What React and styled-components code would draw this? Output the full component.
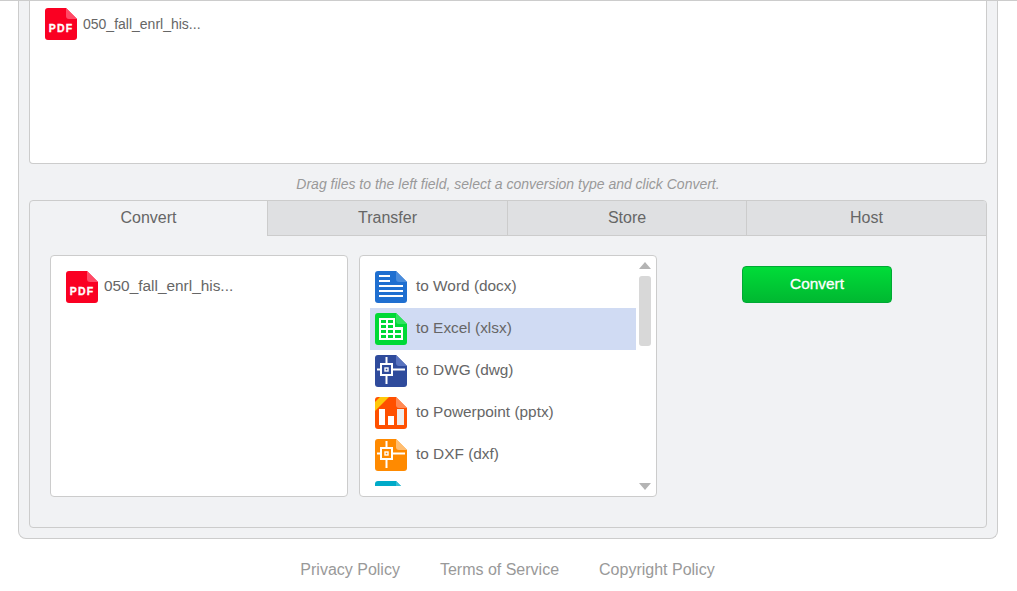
import React from 'react';
import styled, { createGlobalStyle } from 'styled-components';

const GlobalStyle = createGlobalStyle`
  html, body {
    margin: 0;
    padding: 0;
    background: #fff;
    font-family: "Liberation Sans", Arial, sans-serif;
    color: #666;
    overflow: hidden;
  }
`;

const Page = styled.div`
  height: 591px;
  border-top: 1px solid #ccc;
  box-sizing: border-box;
`;

const Panel = styled.main`
  box-sizing: border-box;
  width: 980px;
  height: 538px;
  margin-left: 18px;
  padding: 0 10px 10px;
  background: #f1f2f4;
  border: 1px solid #ccc;
  border-top: none;
  border-radius: 0 0 8px 8px;
`;

const DropField = styled.section`
  box-sizing: border-box;
  height: 163px;
  padding: 7px 15px;
  background: #fff;
  border: 1px solid #ccc;
  border-top: none;
  border-radius: 0 0 4px 4px;
`;

const FileRow = styled.div`
  display: flex;
  align-items: center;
  gap: 6px;
  font-size: ${(p) => (p.$large ? '15.4px' : '14px')};
  color: #666;
`;

const FileName = styled.span`
  margin-bottom: ${(p) => (p.$large ? '2px' : '0')};
`;

const Hint = styled.p`
  margin: 0;
  height: 36px;
  line-height: 41px;
  text-align: center;
  font-size: 14px;
  font-style: italic;
  color: #999;
`;

const TabPanel = styled.section`
  box-sizing: border-box;
  height: 328px;
  border: 1px solid #ccc;
  border-radius: 4px;
  overflow: hidden;
`;

const TabBar = styled.nav`
  display: grid;
  grid-template-columns: 237px 240px 239px 1fr;
  height: 35px;
`;

const Tab = styled.div`
  display: flex;
  align-items: center;
  justify-content: center;
  box-sizing: border-box;
  font-size: 16px;
  color: #666;
  background: ${(p) => (p.$active ? 'transparent' : '#dfe0e2')};
  border-bottom: 1px solid ${(p) => (p.$active ? 'transparent' : '#ccc')};
  border-left: ${(p) => (p.$active ? 'none' : '1px solid #ccc')};
`;

const TabBody = styled.div`
  display: flex;
  padding: 19px 20px;
  gap: 11px;
`;

const Box = styled.div`
  position: relative;
  box-sizing: border-box;
  width: 298px;
  height: 242px;
  background: #fff;
  border: 1px solid #ccc;
  border-radius: 4px;
`;

const SelectedFiles = styled(Box)`
  padding: 15px;
`;

const TypeList = styled.div`
  height: 220px;
  margin: 10px 0 0 10px;
  width: 266px;
  overflow: hidden;
`;

const TypeRow = styled.div`
  display: flex;
  align-items: center;
  gap: 9px;
  height: 42px;
  padding-left: 5px;
  font-size: 15.4px;
  color: #666;
  background: ${(p) => (p.$selected ? '#d0dbf3' : 'transparent')};
`;

const TypeLabel = styled.span`
  margin-bottom: 2px;
`;

const ScrollThumb = styled.div`
  position: absolute;
  top: 20px;
  right: 5px;
  width: 12px;
  height: 70px;
  border-radius: 3px;
  background: #d8d8d8;
`;

const Arrow = styled.div`
  position: absolute;
  right: 5px;
  ${(p) => (p.$up ? 'top: 6px;' : 'bottom: 6px;')}
  width: 0;
  height: 0;
  border-left: 6px solid transparent;
  border-right: 6px solid transparent;
  ${(p) => (p.$up ? 'border-bottom: 7px solid #b4b4b4;' : 'border-top: 7px solid #b4b4b4;')}
`;

const ActionColumn = styled.div`
  width: 150px;
  margin-left: 74px;
  padding-top: 11px;
`;

const ConvertButton = styled.button`
  box-sizing: border-box;
  width: 150px;
  height: 37px;
  padding: 0 0 2px;
  border: 1px solid #00a934;
  border-radius: 4px;
  background: linear-gradient(#00dc38, #00b831);
  color: #fff;
  font-family: inherit;
  font-size: 15.4px;
  -webkit-text-stroke: 0.3px #fff;
`;

const Footer = styled.footer`
  display: flex;
  justify-content: center;
  gap: 40px;
  margin-top: 21px;
  padding-right: 2px;
  line-height: 20px;
  font-size: 16px;
  color: #999;
`;

function FileIcon({ color, fold, children }) {
  return (
    <svg width="32" height="32" viewBox="0 0 32 32" style={{ flex: 'none' }}>
      <path
        d="M3 0H21L32 11V29a3 3 0 0 1-3 3H3a3 3 0 0 1-3-3V3a3 3 0 0 1 3-3Z"
        fill={color}
      />
      {children}
      <path d="M21 0L32 11H24a3 3 0 0 1-3-3Z" fill={fold} />
    </svg>
  );
}

function PdfIcon() {
  return (
    <FileIcon color="#fa0022" fold="#ff4a66">
      <text x="16" y="24" textAnchor="middle" fontFamily="Liberation Sans, sans-serif" fontWeight="700" fontSize="10.5" letterSpacing="1.2" fill="#fff" stroke="#fff" strokeWidth="0.3">
        PDF
      </text>
    </FileIcon>
  );
}

function CadMark() {
  return (
    <g fill="none" stroke="#fff" strokeWidth="2">
      <rect x="6" y="9" width="11" height="11" />
      <rect x="10" y="13" width="3" height="3" strokeWidth="1.4" />
      <path d="M2 14.5H6M17 14.5H30M11.5 2V9M11.5 20V29" />
    </g>
  );
}

const excelCells = [
  [6, 7, 5, 3], [13, 7, 5, 3],
  [6, 12, 5, 3], [13, 12, 5, 3],
  [6, 17, 5, 3], [13, 17, 5, 3], [20, 17, 6, 3],
  [6, 22, 5, 3], [13, 22, 5, 3], [20, 22, 6, 3],
];

const types = [
  {
    label: 'to Word (docx)',
    color: '#1f6fd0',
    fold: '#4a8cdc',
    art: <path d="M4 5H15M4 10H15M4 15H28M4 20H28M4 25H28" stroke="#fff" strokeWidth="1.8" />,
  },
  {
    label: 'to Excel (xlsx)',
    color: '#00d936',
    fold: '#2fe35f',
    selected: true,
    art: (
      <>
        <path d="M4 5H20V14H28V27H4Z" fill="#fff" />
        {excelCells.map(([x, y, w, h]) => (
          <rect key={`${x}-${y}`} x={x} y={y} width={w} height={h} fill="#00d936" />
        ))}
      </>
    ),
  },
  { label: 'to DWG (dwg)', color: '#2f4b9c', fold: '#5a74c0', art: <CadMark /> },
  {
    label: 'to Powerpoint (pptx)',
    color: '#ff5000',
    fold: '#ff8a55',
    art: (
      <>
        <path d="M0 5L5 0H14L0 14Z" fill="#ffc80a" />
        <path d="M4 28V12H10V28ZM13 28V19H19V28Z" fill="#fff" />
        <rect x="22" y="12" width="7" height="16" fill="#ececec" />
      </>
    ),
  },
  { label: 'to DXF (dxf)', color: '#ff8a00', fold: '#ffbd70', art: <CadMark /> },
  { color: '#00aac8', fold: '#36bcd4', art: null },
];

export default function App() {
  return (
    <>
      <GlobalStyle />
      <Page>
        <Panel>
          <DropField>
            <FileRow>
              <PdfIcon />
              <FileName>050_fall_enrl_his...</FileName>
            </FileRow>
          </DropField>
          <Hint>Drag files to the left field, select a conversion type and click Convert.</Hint>
          <TabPanel>
            <TabBar>
              <Tab $active>Convert</Tab>
              <Tab>Transfer</Tab>
              <Tab>Store</Tab>
              <Tab>Host</Tab>
            </TabBar>
            <TabBody>
              <SelectedFiles>
                <FileRow $large>
                  <PdfIcon />
                  <FileName $large>050_fall_enrl_his...</FileName>
                </FileRow>
              </SelectedFiles>
              <Box>
                <TypeList>
                  {types.map((t) => (
                    <TypeRow key={t.color} $selected={t.selected}>
                      <FileIcon color={t.color} fold={t.fold}>{t.art}</FileIcon>
                      {t.label && <TypeLabel>{t.label}</TypeLabel>}
                    </TypeRow>
                  ))}
                </TypeList>
                <Arrow $up />
                <ScrollThumb />
                <Arrow />
              </Box>
              <ActionColumn>
                <ConvertButton>Convert</ConvertButton>
              </ActionColumn>
            </TabBody>
          </TabPanel>
        </Panel>
        <Footer>
          <span>Privacy Policy</span>
          <span>Terms of Service</span>
          <span>Copyright Policy</span>
        </Footer>
      </Page>
    </>
  );
}
